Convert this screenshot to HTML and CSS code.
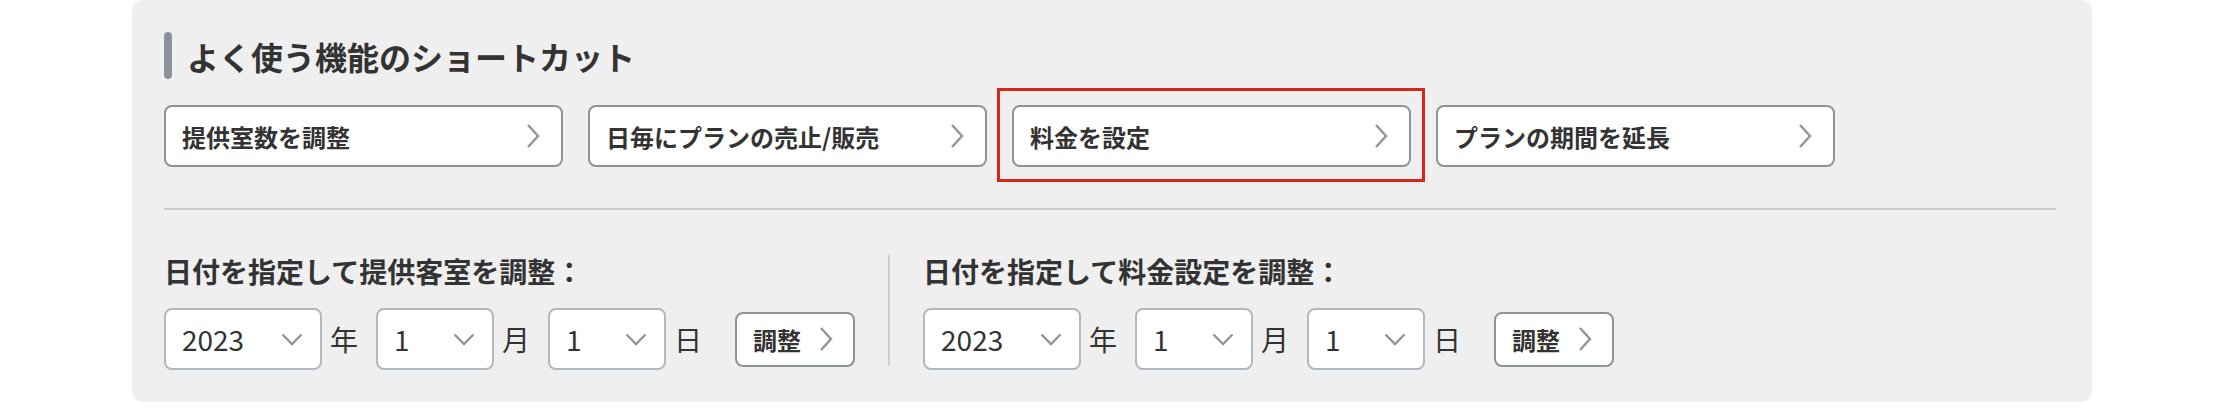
FILE: index.html
```html
<!DOCTYPE html>
<html>
<head>
    <title>よく使う機能のショートカット</title>
    <link rel="stylesheet" href="styles.css">
</head>
<body>

    <div class="panel">
        <h2 class="section-title"><span class="title-bar"></span>よく使う機能のショートカット</h2>

        <div class="shortcut-list">
            <a class="shortcut" href="#">提供室数を調整
                <svg class="chev" width="14" height="26" viewBox="0 0 14 26"><polyline points="2,2 12,13 2,24"/></svg>
            </a>
            <a class="shortcut" href="#">日毎にプランの売止/販売
                <svg class="chev" width="14" height="26" viewBox="0 0 14 26"><polyline points="2,2 12,13 2,24"/></svg>
            </a>
            <a class="shortcut highlight" href="#">料金を設定
                <svg class="chev" width="14" height="26" viewBox="0 0 14 26"><polyline points="2,2 12,13 2,24"/></svg>
            </a>
            <a class="shortcut" href="#">プランの期間を延長
                <svg class="chev" width="14" height="26" viewBox="0 0 14 26"><polyline points="2,2 12,13 2,24"/></svg>
            </a>
        </div>

        <div class="divider"></div>

        <div class="date-section">
            <div class="date-col">
                <div class="date-label">日付を指定して提供客室を調整：</div>
                <div class="date-row">
                    <div class="select-wrap year">
                        <select><option>2023</option></select>
                        <svg class="down" width="22" height="13" viewBox="0 0 22 13"><polyline points="1.5,1.5 11,11 20.5,1.5"/></svg>
                    </div>
                    <span class="unit">年</span>
                    <div class="select-wrap">
                        <select><option>1</option></select>
                        <svg class="down" width="22" height="13" viewBox="0 0 22 13"><polyline points="1.5,1.5 11,11 20.5,1.5"/></svg>
                    </div>
                    <span class="unit">月</span>
                    <div class="select-wrap">
                        <select><option>1</option></select>
                        <svg class="down" width="22" height="13" viewBox="0 0 22 13"><polyline points="1.5,1.5 11,11 20.5,1.5"/></svg>
                    </div>
                    <span class="unit last">日</span>
                    <button class="adjust-btn">調整
                        <svg class="chev" width="14" height="26" viewBox="0 0 14 26"><polyline points="2,2 12,13 2,24"/></svg>
                    </button>
                </div>
            </div>

            <div class="vline"></div>

            <div class="date-col">
                <div class="date-label">日付を指定して料金設定を調整：</div>
                <div class="date-row">
                    <div class="select-wrap year">
                        <select><option>2023</option></select>
                        <svg class="down" width="22" height="13" viewBox="0 0 22 13"><polyline points="1.5,1.5 11,11 20.5,1.5"/></svg>
                    </div>
                    <span class="unit">年</span>
                    <div class="select-wrap">
                        <select><option>1</option></select>
                        <svg class="down" width="22" height="13" viewBox="0 0 22 13"><polyline points="1.5,1.5 11,11 20.5,1.5"/></svg>
                    </div>
                    <span class="unit">月</span>
                    <div class="select-wrap">
                        <select><option>1</option></select>
                        <svg class="down" width="22" height="13" viewBox="0 0 22 13"><polyline points="1.5,1.5 11,11 20.5,1.5"/></svg>
                    </div>
                    <span class="unit last">日</span>
                    <button class="adjust-btn">調整
                        <svg class="chev" width="14" height="26" viewBox="0 0 14 26"><polyline points="2,2 12,13 2,24"/></svg>
                    </button>
                </div>
            </div>
        </div>
    </div>

</body>
</html>
```

FILE: styles.css
```css
body {
    font-family: "Noto Sans CJK JP", "Noto Sans", sans-serif;
    background-color: #fff;
    color: #333;
    margin: 0;
}

.panel {
    width: 1960px;
    margin: 0 auto;
    box-sizing: border-box;
    padding: 32px 36px 32px 32px;
    background-color: #efefef;
    border-radius: 10px;
}

.section-title {
    display: flex;
    align-items: center;
    gap: 15px;
    height: 47px;
    margin: 0;
    font-size: 32px;
    font-weight: 700;
    color: #333;
}

.title-bar {
    width: 8px;
    height: 47px;
    border-radius: 4px;
    background-color: #8b9199;
}

/* shortcut buttons */
.shortcut-list {
    display: flex;
    gap: 25px;
    margin-top: 26px;
}

.shortcut {
    position: relative;
    display: flex;
    align-items: center;
    justify-content: space-between;
    width: 399px;
    height: 62px;
    box-sizing: border-box;
    padding: 0 21px 0 16px;
    background-color: #fff;
    border: 2px solid #8d939b;
    border-radius: 8px;
    font-size: 24px;
    font-weight: 700;
    color: #333;
    text-decoration: none;
}

/* red annotation box */
.highlight::after {
    content: "";
    position: absolute;
    top: -19px;
    left: -17px;
    right: -16px;
    bottom: -17px;
    border: 3px solid #d52617;
}

.chev polyline,
.down polyline {
    fill: none;
    stroke: #8f959d;
    stroke-width: 2.4;
    stroke-linejoin: miter;
}

.divider {
    height: 2px;
    background-color: #cacaca;
    margin-top: 41px;
}

/* date section */
.date-section {
    display: flex;
    align-items: center;
    margin-top: 41px;
}

.date-label {
    height: 40px;
    line-height: 40px;
    font-size: 28px;
    font-weight: 700;
}

.date-row {
    display: flex;
    align-items: center;
    margin-top: 17px;
}

.vline {
    width: 2px;
    height: 111px;
    background-color: #cfcfcf;
    margin: 0 33px;
}

.select-wrap {
    position: relative;
    width: 118px;
    height: 62px;
}

.select-wrap.year {
    width: 158px;
}

.select-wrap select {
    -webkit-appearance: none;
    appearance: none;
    width: 100%;
    height: 100%;
    box-sizing: border-box;
    padding: 0 0 0 16px;
    background-color: #fff;
    border: 2px solid #b3b8bf;
    border-radius: 8px;
    font-family: "Noto Sans CJK JP", "Noto Sans", sans-serif;
    font-size: 28px;
    color: #333;
}

.select-wrap .down {
    position: absolute;
    right: 19px;
    top: 25px;
    pointer-events: none;
}

.unit {
    margin: 0 18px 0 8px;
    font-size: 28px;
    line-height: 40px;
}

.unit.last {
    margin-right: 33px;
}

.adjust-btn {
    display: flex;
    align-items: center;
    gap: 18px;
    height: 55px;
    box-sizing: border-box;
    padding: 0 20px 0 16px;
    background-color: #fff;
    border: 2px solid #8d939b;
    border-radius: 8px;
    font-family: "Noto Sans CJK JP", "Noto Sans", sans-serif;
    font-size: 24px;
    font-weight: 700;
    color: #333;
}
```
